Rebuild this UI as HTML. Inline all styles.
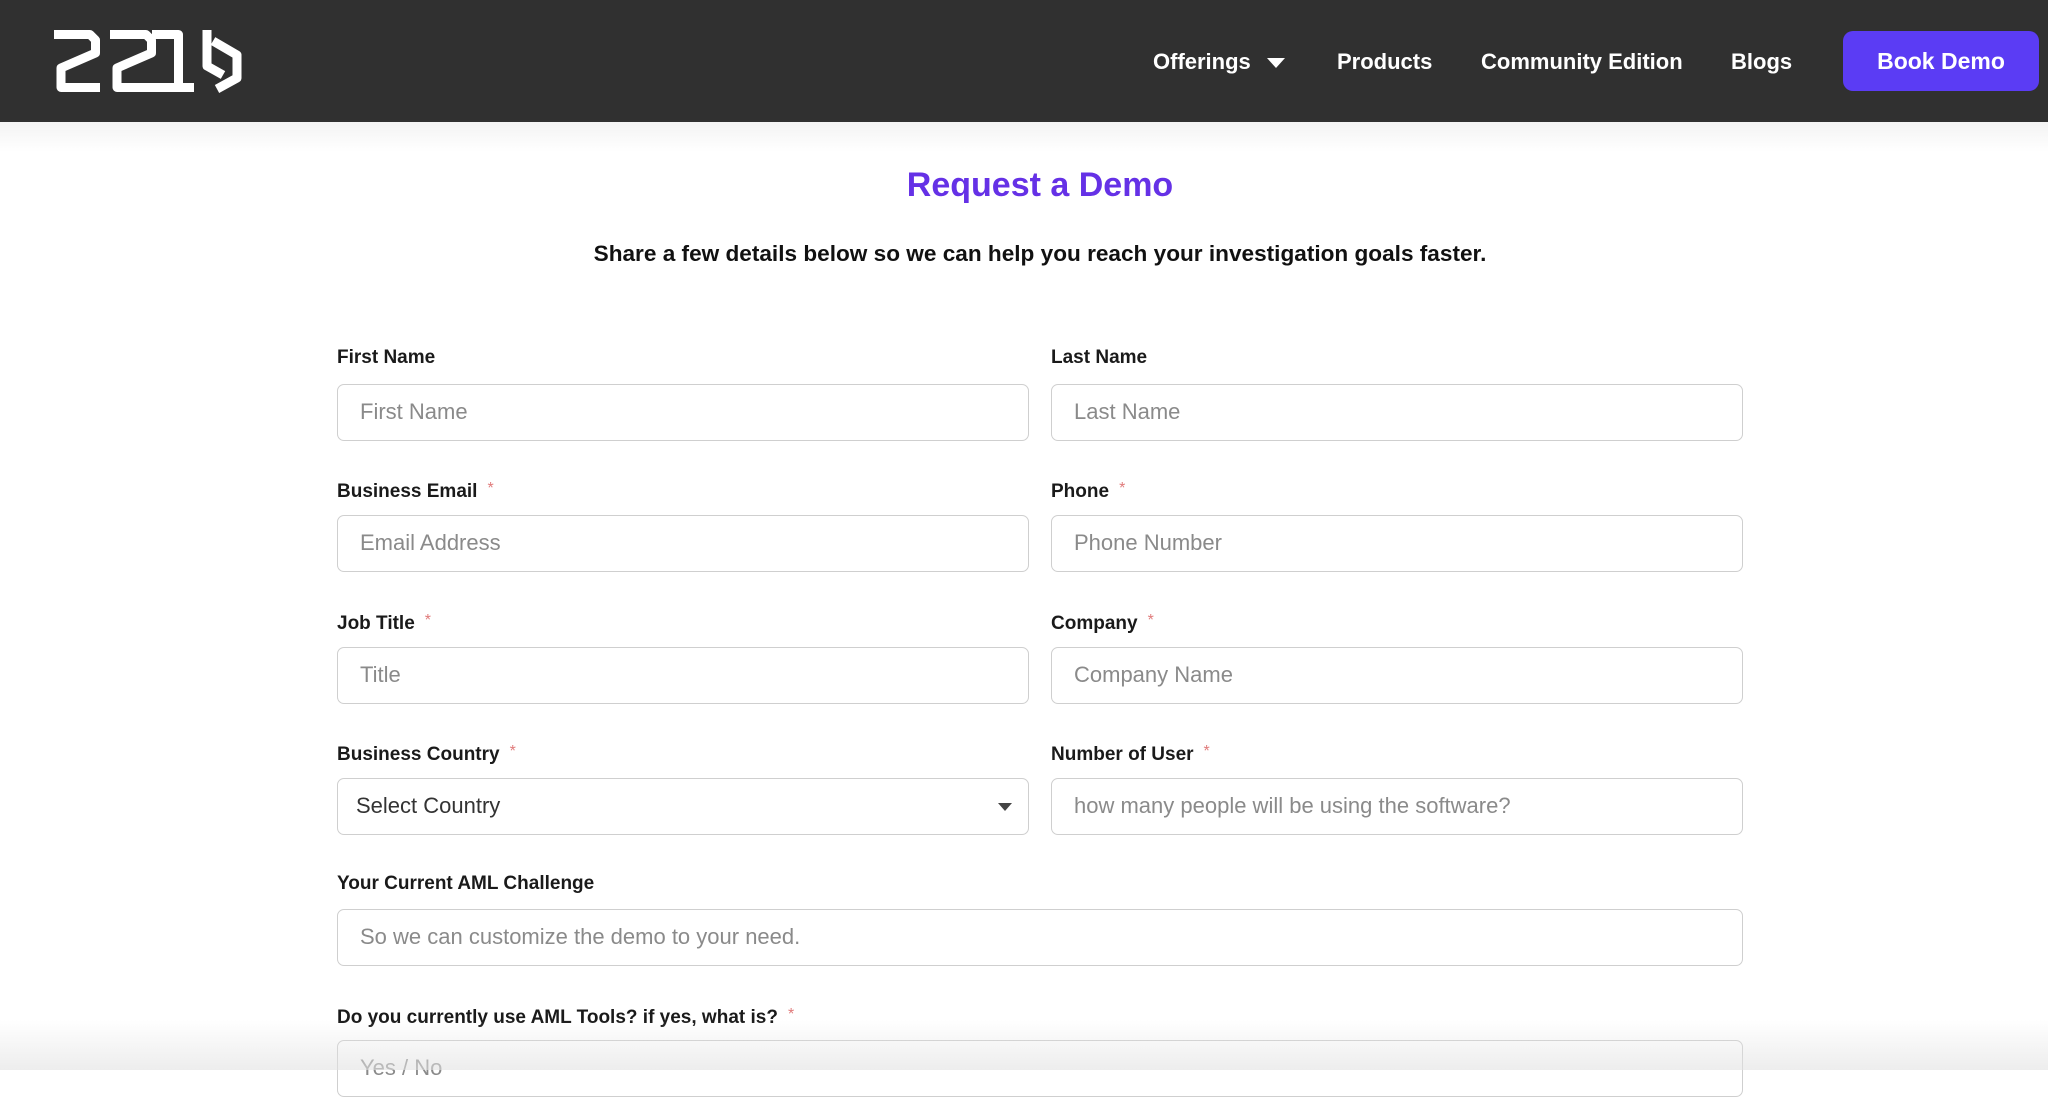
<!DOCTYPE html>
<html><head><meta charset="utf-8"><style>
*{margin:0;padding:0;box-sizing:border-box}
body{width:2048px;height:1070px;overflow:hidden;background:#fff;font-family:"Liberation Sans",sans-serif;position:relative}
.hdr{position:absolute;left:0;top:0;width:2048px;height:122px;background:#303030}
.nav{position:absolute;top:48px;color:#fff;font-size:22px;font-weight:bold;line-height:28px}
.btn{position:absolute;left:1843px;top:31px;width:196px;height:60px;background:#5b3cf4;border-radius:10px;color:#fff;font-size:23px;font-weight:bold;text-align:center;line-height:60px}
.title{position:absolute;left:0;width:2080px;top:166px;text-align:center;color:#6531e6;font-size:34px;font-weight:bold}
.sub{position:absolute;left:0;width:2080px;top:241px;text-align:center;color:#111;font-size:22.6px;font-weight:bold}
.lbl{position:absolute;font-size:19px;font-weight:bold;color:#1a1a1a;line-height:24px}
.lbl i{color:#e07a7a;font-style:normal;font-weight:normal;font-size:16px;margin-left:10px;vertical-align:4px}
.in{position:absolute;height:57px;border:1.5px solid #cfcfcf;border-radius:7px;background:#fff;font-size:22px;color:#8a8a8a;line-height:54px;padding-left:22px}
.shade{position:absolute;left:0;top:122px;width:2048px;height:30px;background:linear-gradient(#f3f3f3,#fff)}
.bot{position:absolute;left:0;top:1020px;width:2048px;height:50px;background:linear-gradient(rgba(255,255,255,0),rgba(225,225,225,.6))}
</style></head><body>
<div class="hdr">
<svg width="260" height="122" style="position:absolute;left:0;top:0">
<g fill="none" stroke="#fff" stroke-width="9" stroke-linejoin="round">
<path d="M54 34.5H90L95.5 40V53L61 68V87.5H100"/>
<path d="M110 34.5H146L151.5 40V53L117 68V87.5H156"/>
<path d="M152 34.5H178.5V87.5M150 87.5H194"/>
<path d="M207 30V66L223 75"/>
<path d="M213 41L237 55V78L217 89"/>
</g></svg>
<div class="nav" style="left:1153px">Offerings <svg width="18" height="12" style="margin-left:10px"><path d="M0 1H18L9 11Z" fill="#fff"/></svg></div>
<div class="nav" style="left:1337px">Products</div>
<div class="nav" style="left:1481px">Community Edition</div>
<div class="nav" style="left:1731px">Blogs</div>
<div class="btn">Book Demo</div>
</div>
<div class="shade"></div>
<div class="title">Request a Demo</div>
<div class="sub">Share a few details below so we can help you reach your investigation goals faster.</div>

<div class="lbl" style="left:337px;top:346px">First Name</div>
<div class="lbl" style="left:1051px;top:346px">Last Name</div>
<div class="in" style="left:337px;top:384px;width:692px">First Name</div>
<div class="in" style="left:1051px;top:384px;width:692px">Last Name</div>

<div class="lbl" style="left:337px;top:477px">Business Email<i>*</i></div>
<div class="lbl" style="left:1051px;top:477px">Phone<i>*</i></div>
<div class="in" style="left:337px;top:515px;width:692px">Email Address</div>
<div class="in" style="left:1051px;top:515px;width:692px">Phone Number</div>

<div class="lbl" style="left:337px;top:609px">Job Title<i>*</i></div>
<div class="lbl" style="left:1051px;top:609px">Company<i>*</i></div>
<div class="in" style="left:337px;top:647px;width:692px">Title</div>
<div class="in" style="left:1051px;top:647px;width:692px">Company Name</div>

<div class="lbl" style="left:337px;top:740px">Business Country<i>*</i></div>
<div class="lbl" style="left:1051px;top:740px">Number of User<i>*</i></div>
<div class="in" style="left:337px;top:778px;width:692px;color:#333;padding-left:18px">Select Country<svg width="14" height="9" style="position:absolute;right:16px;top:24px"><path d="M0 0H14L7 8Z" fill="#444"/></svg></div>
<div class="in" style="left:1051px;top:778px;width:692px">how many people will be using the software?</div>

<div class="lbl" style="left:337px;top:872px">Your Current AML Challenge</div>
<div class="in" style="left:337px;top:909px;width:1406px">So we can customize the demo to your need.</div>

<div class="lbl" style="left:337px;top:1003px">Do you currently use AML Tools? if yes, what is?<i>*</i></div>
<div class="in" style="left:337px;top:1040px;width:1406px">Yes / No</div>
<div class="bot"></div>
</body></html>
